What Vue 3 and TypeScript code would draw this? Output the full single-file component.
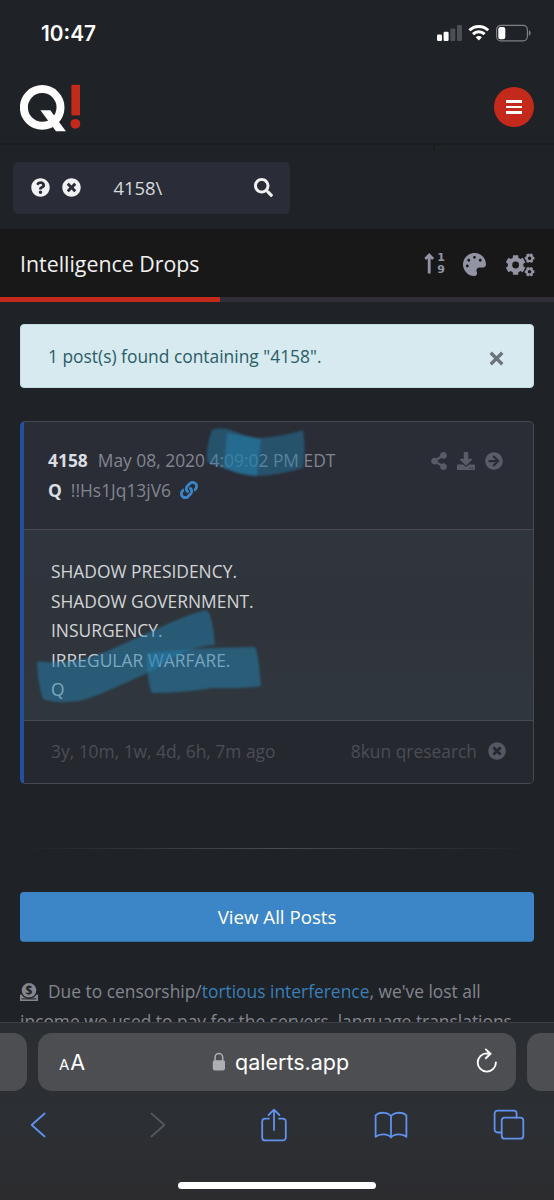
<script setup lang="ts">
interface Glyph {
  box: string
  d: string
}

const glyphs: Record<string, Glyph> = {
  question: {
    box: '0 0 512 512',
    d: 'M504 256c0 136.997-111.043 248-248 248S8 392.997 8 256C8 119.083 119.043 8 256 8s248 111.083 248 248zM262.655 90c-54.497 0-89.255 22.957-116.549 63.758-3.536 5.286-2.353 12.415 2.715 16.258l34.699 26.31c5.205 3.947 12.621 3.008 16.665-2.122 17.864-22.658 30.113-35.797 57.303-35.797 20.429 0 45.698 13.148 45.698 32.958 0 14.976-12.363 22.667-32.534 33.976C247.128 238.528 216 254.941 216 296v4c0 6.627 5.373 12 12 12h56c6.627 0 12-5.373 12-12v-1.333c0-28.462 83.186-29.647 83.186-106.667 0-58.002-60.165-102-116.531-102zM256 338c-25.365 0-46 20.635-46 46 0 25.364 20.635 46 46 46s46-20.636 46-46c0-25.365-20.635-46-46-46z',
  },
  clear: {
    box: '0 0 512 512',
    d: 'M256 8C119 8 8 119 8 256s111 248 248 248 248-111 248-248S393 8 256 8zm121.6 313.1c4.7 4.7 4.7 12.3 0 17L338 377.6c-4.7 4.7-12.3 4.7-17 0L256 312l-65.1 65.6c-4.7 4.7-12.3 4.7-17 0L134.4 338c-4.7-4.7-4.7-12.3 0-17l65.6-65-65.6-65.1c-4.7-4.7-4.7-12.3 0-17l39.6-39.6c4.7-4.7 12.3-4.7 17 0l65 65.7 65.1-65.6c4.7-4.7 12.3-4.7 17 0l39.6 39.6c4.7 4.7 4.7 12.3 0 17L312 256l65.6 65.1z',
  },
  search: {
    box: '0 0 512 512',
    d: 'M505 442.7L405.3 343c-4.5-4.5-10.6-7-17-7H372c27.6-35.3 44-79.7 44-128C416 93.1 322.9 0 208 0S0 93.1 0 208s93.1 208 208 208c48.3 0 92.7-16.4 128-44v16.3c0 6.4 2.5 12.5 7 17l99.7 99.7c9.4 9.4 24.6 9.4 33.9 0l28.3-28.3c9.4-9.4 9.4-24.6.1-34zM208 336c-70.7 0-128-57.2-128-128 0-70.7 57.2-128 128-128 70.7 0 128 57.2 128 128 0 70.7-57.2 128-128 128z',
  },
  palette: {
    box: '0 0 512 512',
    d: 'M204.3 5C104.9 24.4 24.8 104.3 5.2 203.4c-37 187 131.7 326.4 258.8 306.7 41.2-6.4 61.4-54.6 42.5-91.7-23.1-45.4 9.9-98.4 60.9-98.4h79.7c35.8 0 64.8-29.6 64.9-65.3C511.5 97.1 368.1-26.9 204.3 5zM96 320c-17.7 0-32-14.3-32-32s14.3-32 32-32 32 14.3 32 32-14.3 32-32 32zm32-128c-17.7 0-32-14.3-32-32s14.3-32 32-32 32 14.3 32 32-14.3 32-32 32zm128-64c-17.7 0-32-14.3-32-32s14.3-32 32-32 32 14.3 32 32-14.3 32-32 32zm128 64c-17.7 0-32-14.3-32-32s14.3-32 32-32 32 14.3 32 32-14.3 32-32 32z',
  },
  link: {
    box: '0 0 512 512',
    d: 'M326.612 185.391c59.747 59.809 58.927 155.698.36 214.59-.11.12-.24.25-.36.37l-67.2 67.2c-59.27 59.27-155.699 59.262-214.96 0-59.27-59.26-59.27-155.7 0-214.96l37.106-37.106c9.84-9.84 26.786-3.3 27.294 10.606.648 17.722 3.826 35.527 9.69 52.721 1.986 5.822.567 12.262-3.783 16.612l-13.087 13.087c-28.026 28.026-28.905 73.66-1.155 101.96 28.024 28.579 74.086 28.749 102.325.51l67.2-67.19c28.191-28.191 28.073-73.757 0-101.83-3.701-3.694-7.429-6.564-10.341-8.569a16.037 16.037 0 0 1-6.947-12.606c-.396-10.567 3.348-21.456 11.698-29.806l21.054-21.055c5.521-5.521 14.182-6.199 20.584-1.731a152.482 152.482 0 0 1 20.522 17.197zM467.547 44.449c-59.261-59.262-155.69-59.27-214.96 0l-67.2 67.2c-.12.12-.25.25-.36.37-58.566 58.892-59.387 154.781.36 214.59a152.454 152.454 0 0 0 20.521 17.196c6.402 4.468 15.064 3.789 20.584-1.731l21.054-21.055c8.35-8.35 12.094-19.239 11.698-29.806a16.037 16.037 0 0 0-6.947-12.606c-2.912-2.005-6.64-4.875-10.341-8.569-28.073-28.073-28.191-73.639 0-101.83l67.2-67.19c28.239-28.239 74.3-28.069 102.325.51 27.75 28.3 26.872 73.934-1.155 101.96l-13.087 13.087c-4.35 4.35-5.769 10.79-3.783 16.612 5.864 17.194 9.042 34.999 9.69 52.721.509 13.906 17.454 20.446 27.294 10.606l37.106-37.106c59.271-59.259 59.271-155.699.001-214.959z',
  },
  share: {
    box: '0 0 448 512',
    d: 'M352 320c-22.608 0-43.387 7.819-59.79 20.895l-102.486-64.054a96.551 96.551 0 0 0 0-41.683l102.486-64.054C308.613 184.181 329.392 192 352 192c53.019 0 96-42.981 96-96S405.019 0 352 0s-96 42.981-96 96c0 7.158.79 14.13 2.276 20.841L155.79 180.895C139.387 167.819 118.608 160 96 160c-53.019 0-96 42.981-96 96s42.981 96 96 96c22.608 0 43.387-7.819 59.79-20.895l102.486 64.054A96.301 96.301 0 0 0 256 416c0 53.019 42.981 96 96 96s96-42.981 96-96-42.981-96-96-96z',
  },
  download: {
    box: '0 0 512 512',
    d: 'M216 0h80c13.3 0 24 10.7 24 24v168h87.7c17.8 0 26.7 21.5 14.1 34.1L269.7 378.3c-7.5 7.5-19.8 7.5-27.3 0L90.1 226.1c-12.6-12.6-3.7-34.1 14.1-34.1H192V24c0-13.3 10.7-24 24-24zm296 376v112c0 13.3-10.7 24-24 24H24c-13.3 0-24-10.7-24-24V376c0-13.3 10.7-24 24-24h146.7l49 49c20.1 20.1 52.5 20.1 72.6 0l49-49H488c13.3 0 24 10.7 24 24zm-124 88c0-11-9-20-20-20s-20 9-20 20 9 20 20 20 20-9 20-20zm64 0c0-11-9-20-20-20s-20 9-20 20 9 20 20 20 20-9 20-20z',
  },
  go: {
    box: '0 0 512 512',
    d: 'M256 8c137 0 248 111 248 248S393 504 256 504 8 393 8 256 119 8 256 8zm-28.9 143.6l75.5 72.4H120c-13.3 0-24 10.7-24 24v16c0 13.3 10.7 24 24 24h182.6l-75.5 72.4c-9.7 9.3-9.9 24.8-.4 34.3l11 10.9c9.4 9.4 24.6 9.4 33.9 0L404.3 273c9.4-9.4 9.4-24.6 0-33.9L271.6 106.3c-9.4-9.4-24.6-9.4-33.9 0l-11 10.9c-9.5 9.6-9.3 25.1.4 34.4z',
  },
}

const postActions = ['share', 'download', 'go']

const postLines = [
  'SHADOW PRESIDENCY.',
  'SHADOW GOVERNMENT.',
  'INSURGENCY.',
  'IRREGULAR WARFARE.',
  'Q',
]

/** Outline of a six-toothed gear with a round hole. */
function gear(cx: number, cy: number, outer: number, root: number, hole: number, turn: number): string {
  const pts: string[] = []
  for (let i = 0; i < 6; i++) {
    const mid = turn + i * 60
    const corners: [number, number][] = [[-21, root], [-15, outer], [15, outer], [21, root]]
    for (const [offset, r] of corners) {
      const a = ((mid + offset) * Math.PI) / 180
      pts.push(`${(cx + r * Math.cos(a)).toFixed(2)} ${(cy + r * Math.sin(a)).toFixed(2)}`)
    }
  }
  const ring = `M${cx - hole} ${cy}a${hole} ${hole} 0 1 0 ${hole * 2} 0a${hole} ${hole} 0 1 0 ${-hole * 2} 0z`
  return `M${pts.join('L')}z${ring}`
}

const gears = [
  gear(9.6, 12, 10.1, 7.8, 3.4, 30),
  gear(23.6, 5.2, 5, 3.9, 1.8, 0),
  gear(23.6, 18.7, 5, 3.9, 1.8, 0),
]
</script>

<template>
  <div class="phone">
    <div class="status">
      <span class="clock">10:47</span>
      <svg class="signals" width="96" height="18" viewBox="0 0 96 18">
        <g fill="#fff">
          <rect x="0" y="10.6" width="5" height="6.4" rx="1.2" />
          <rect x="6.6" y="7.8" width="5" height="9.2" rx="1.2" />
          <rect x="13.3" y="4.4" width="5" height="12.6" rx="1.2" fill="#4c4f53" />
          <rect x="20" y="1" width="5" height="16" rx="1.2" fill="#4c4f53" />
        </g>
        <g fill="none" stroke="#fff" stroke-width="2.9">
          <path d="M32.4 6.3a13.4 13.4 0 0 1 18.8 0" />
          <path d="M36 10.1a8.3 8.3 0 0 1 11.6 0" />
        </g>
        <path d="M38.7 13.2a4.3 4.3 0 0 1 6.2 0l-3.1 3.4z" fill="#fff" />
        <rect x="59.600" y="1.400" width="30.800" height="15.400" rx="4.200" fill="none" stroke="#7e8083" stroke-width="1.200" />
        <rect x="61.300" y="3" width="7" height="12.200" rx="2.200" fill="#fff" />
        <path d="M91.900 6.600c2.400.6 2.400 4.400 0 5z" fill="#7e8083" />
      </svg>
    </div>

    <header class="top">
      <svg class="logo" width="64" height="50" viewBox="0 0 64 50">
        <circle cx="22.200" cy="23.400" r="18.300" fill="none" stroke="#fff" stroke-width="8" />
        <path d="M20.400 26.200h9.900L45.900 47.300H36z" fill="#fff" />
        <path d="M51.400 .8h8.600v30.600h-8.600z" fill="#c42a1c" />
        <circle cx="55.400" cy="39.800" r="4.900" fill="#c42a1c" />
      </svg>
      <button class="menu" aria-label="Menu"><i></i><i></i><i></i></button>
    </header>

    <div class="search-row">
      <div class="search">
        <svg class="ic q" :viewBox="glyphs.question.box"><path :d="glyphs.question.d" /></svg>
        <svg class="ic x" :viewBox="glyphs.clear.box"><path :d="glyphs.clear.d" /></svg>
        <span class="term">4158\</span>
        <svg class="ic find" :viewBox="glyphs.search.box"><path :d="glyphs.search.d" /></svg>
      </div>
      <div class="tick"></div>
    </div>

    <div class="title">
      <h1>Intelligence Drops</h1>
      <div class="sort">
        <svg width="11" height="24" viewBox="0 0 11 24">
          <path d="M5.200 21.600V3.600M1.300 7l3.900-4 3.900 4" fill="none" stroke="currentColor" stroke-width="2.800" />
        </svg>
        <div class="digits"><span>1</span><span>9</span></div>
      </div>
      <svg class="ic pal" :viewBox="glyphs.palette.box"><path :d="glyphs.palette.d" /></svg>
      <svg class="cogs" width="29" height="24" viewBox="0 0 29 24">
        <path v-for="(g, i) in gears" :key="i" :d="g" fill-rule="evenodd" />
      </svg>
    </div>
    <div class="progress"><div></div></div>

    <main>
      <div class="alert">
        <span>1 post(s) found containing "4158".</span>
        <svg width="15" height="15" viewBox="0 0 14 14"><path d="M1.600 1.600l10.800 10.800M12.400 1.600L1.600 12.400" /></svg>
      </div>

      <article class="card">
        <div class="head">
          <div class="meta">
            <div class="row"><b>4158</b><span class="date">May 08, 2020 4:09:02 PM EDT</span></div>
            <div class="row">
              <b>Q</b><span class="trip">!!Hs1Jq13jV6</span>
              <svg class="ic chain" :viewBox="glyphs.link.box"><path :d="glyphs.link.d" /></svg>
            </div>
          </div>
          <div class="actions">
            <svg v-for="a in postActions" :key="a" class="ic" :class="a" :viewBox="glyphs[a].box">
              <path :d="glyphs[a].d" />
            </svg>
          </div>
        </div>
        <div class="body">
          <p v-for="line in postLines" :key="line">{{ line }}</p>
        </div>
        <div class="foot">
          <span class="ago">3y, 10m, 1w, 4d, 6h, 7m ago</span>
          <span class="board">8kun qresearch</span>
          <svg class="ic" :viewBox="glyphs.clear.box"><path :d="glyphs.clear.d" /></svg>
        </div>
        <svg class="marker" width="514" height="363" viewBox="20 421 514 363">
          <path d="M212 430Q222 426 234 431Q248 438 262 438Q284 436 303 430Q306 448 303 468Q280 475 256 476Q230 472 207 462Q206 446 212 430z" opacity=".46" />
          <path d="M227 433Q246 436 261 439L257 476Q241 476 224 468z" opacity=".56" />
          <path d="M37 663Q38 660 45 662Q80 664 112 649C145 635 178 617 206 610Q212 612 215 645Q182 647 154 670C122 684 97 697 79 701Q54 704 43 699Q38 684 37 663z" opacity=".52" />
          <path d="M147 653Q200 647 255 647Q258 650 261 686Q240 689 213 688Q184 693 152 693Q147 684 147 653z" opacity=".55" />
        </svg>
      </article>

      <div class="rule"></div>
      <button class="all">View All Posts</button>

      <p class="note">
        <svg class="donate" width="18" height="18" viewBox="0 0 18 18">
          <path d="M0 11.600h2.600l1.800 2h9.200l1.800-2H18V18H0z" />
          <circle cx="9" cy="7.600" r="8.400" fill="#1f2226" />
          <circle cx="9" cy="7.300" r="7.300" />
          <path d="M1.600 15.900h14.800" stroke="#1f2226" stroke-width="1" />
          <text x="9" y="11.600">$</text>
        </svg>
        <span>Due to censorship/<a>tortious interference</a>, we've lost all</span><br />
        <span>income we used to pay for the servers, language translations</span>
      </p>
    </main>

    <footer class="safari">
      <div class="tabs">
        <div class="tab side"></div>
        <div class="tab current">
          <span class="aa"><small>A</small>A</span>
          <div class="site">
            <svg width="14" height="20" viewBox="0 0 14 20">
              <rect x=".8" y="8.200" width="12.200" height="10.200" rx="1.800" fill="#aeaeb5" />
              <path d="M3.100 9V5.200a3.800 3.800 0 0 1 7.600 0V9" fill="none" stroke="#aeaeb5" stroke-width="1.500" />
            </svg>
            <span>qalerts.app</span>
          </div>
          <svg class="reload" width="22" height="26" viewBox="0 0 22 26">
            <path d="M10.800 5.400a9.100 9.100 0 1 0 9.100 9.100M9.800 1.400l4.700 4.400-4.700 4.400M14.200 5.700l-3.400-.2" />
          </svg>
        </div>
        <div class="tab side"></div>
      </div>
      <nav class="tools">
        <svg viewBox="-8 -3 34 34"><path d="M15.600 2.500L2.700 14l12.900 11.500" /></svg>
        <svg class="off" viewBox="-10 -3 34 34"><path d="M2.400 2.500L15.300 14 2.400 25.500" /></svg>
        <svg viewBox="-3 0 34 34">
          <path d="M9 10.600H5.200A3 3 0 0 0 2.200 13.600v15.800a3 3 0 0 0 3 3h17.600a3 3 0 0 0 3-3V13.600a3 3 0 0 0-3-3H19M14 22V1.600M8.600 7L14 1.600 19.400 7" />
        </svg>
        <svg viewBox="0 -3 34 34">
          <path d="M17 5v21.500M17 5C14 1.200 5.500.4 1.600 4.400v21.400C5.500 22.400 14 22.600 17 26.500C20 22.600 28.500 22.400 32.400 25.800V4.400C28.500.4 20 1.200 17 5z" />
        </svg>
        <svg viewBox="-1 -1 34 34">
          <path d="M8.600 23.500H4.600a3 3 0 0 1-3-3V4.600a3 3 0 0 1 3-3h16a3 3 0 0 1 3 3V8.700" />
          <rect x="8.700" y="8.700" width="21.600" height="21" rx="3" />
        </svg>
      </nav>
      <div class="home"></div>
    </footer>
  </div>
</template>

<style>
body {
  margin: 0;
  background: #1f2226;
}
</style>

<style scoped>
.phone {
  width: 554px;
  height: 1200px;
  overflow: hidden;
  display: flex;
  flex-direction: column;
  background: #1f2226;
  color: #84858f;
  font-family: 'Open Sans', 'Noto Sans', sans-serif;
  font-size: 17.4px;
  box-sizing: border-box;
}
.phone * {
  box-sizing: border-box;
}
svg {
  display: block;
  flex: none;
}
button {
  border: 0;
  padding: 0;
  font: inherit;
}
.ic {
  fill: currentColor;
}

.status {
  height: 66px;
  flex: none;
  display: flex;
  justify-content: space-between;
  padding: 0 21px 0 41px;
}
.clock {
  font: 600 20.8px/24px Inter, sans-serif;
  color: #fff;
  padding-top: 22px;
}
.signals {
  margin-top: 24px;
}

.top {
  height: 79px;
  flex: none;
  display: flex;
  justify-content: space-between;
  padding: 0 20px;
  border-bottom: 2px solid #1a1c20;
}
.logo {
  margin-top: 18px;
}
.menu {
  width: 40px;
  height: 40px;
  margin-top: 21px;
  border-radius: 50%;
  background: #c42a1c;
  display: flex;
  flex-direction: column;
  align-items: center;
  justify-content: center;
  gap: 3.2px;
}
.menu i {
  width: 15.5px;
  height: 2.5px;
  border-radius: 0.5px;
  background: #fff;
}

.search-row {
  height: 84px;
  flex: none;
  display: flex;
  align-items: flex-start;
  padding: 0 13px;
}
.tick {
  width: 2px;
  height: 6px;
  margin-left: 143px;
  background: #1a1c20;
}
.search {
  width: 277px;
  height: 52px;
  margin-top: 17px;
  border-radius: 5px;
  background: #2a2d37;
  color: #f0f1f3;
  display: flex;
  align-items: center;
  padding: 0 17px 2px 17.5px;
}
.q,
.x {
  width: 19px;
  height: 19px;
}
.x {
  margin-left: 12px;
}
.term {
  margin-left: 33px;
  font-size: 18.4px;
  color: #d8d9de;
}
.find {
  width: 19px;
  height: 19px;
  margin-left: auto;
}

.title {
  height: 68px;
  flex: none;
  display: flex;
  align-items: center;
  padding: 0 20px;
  background: #181818;
  color: #9394a3;
}
.title h1 {
  margin: 0 auto 0 0;
  font-size: 21.35px;
  font-weight: 400;
  color: #f1f1f1;
  padding-top: 1px;
  white-space: nowrap;
}
.sort {
  display: flex;
  gap: 2px;
  margin-top: 2px;
}
.digits {
  display: flex;
  flex-direction: column;
  font: 700 11px/12px 'DejaVu Sans', sans-serif;
}
.pal {
  width: 23px;
  height: 23px;
  margin: 3px 20px 0 18px;
}
.cogs {
  fill: currentColor;
  margin-top: 3px;
  margin-right: -1px;
}
.progress {
  height: 5px;
  flex: none;
  background: #302f37;
}
.progress div {
  width: 220px;
  height: 5px;
  background: #c42a1c;
}

main {
  flex: 1;
  min-height: 0;
  overflow: hidden;
  padding: 22px 20px 0;
}
.alert {
  height: 64px;
  border-radius: 4px;
  border: 1px solid #c3dde3;
  background: #d6eaef;
  color: #2c5c68;
  display: flex;
  align-items: center;
  justify-content: space-between;
  padding: 0 29px 0 27px;
}
.alert span {
  white-space: nowrap;
}
.alert svg {
  margin-top: 4px;
  stroke: #6b7577;
  stroke-width: 3.1;
}

.card {
  position: relative;
  height: 363px;
  margin-top: 33px;
  border: 1px solid #464951;
  border-left: 4px solid #234f9c;
  border-radius: 5px;
  background: #2a2d36;
}
.head {
  height: 108px;
  display: flex;
  justify-content: space-between;
  padding: 24px 30px 0 24px;
  border-bottom: 1px solid #464951;
}
.meta {
  margin-top: -1px;
}
.row {
  display: flex;
  align-items: center;
  height: 30px;
  white-space: nowrap;
}
.row b {
  color: #dcdde3;
}
.row span {
  margin-left: 10px;
}
.row .trip {
  margin-left: 9px;
}
.chain {
  width: 18px;
  height: 18px;
  margin-left: 9px;
  color: #3a86c8;
}
.actions {
  display: flex;
  gap: 10px;
  padding-top: 6px;
  color: #595b66;
}
.actions .share {
  width: 16px;
  height: 18px;
}
.actions .download,
.actions .go {
  width: 18px;
  height: 18px;
}
.body {
  height: 191px;
  padding: 27px 27px 0;
  background: linear-gradient(#2f353d, #2f343a 50%, #2f373e);
  border-bottom: 1px solid #464951;
  color: #d3d4d9;
}
.body p {
  margin: 0;
  height: 29.5px;
  line-height: 29.5px;
  white-space: nowrap;
}
.foot {
  height: 62px;
  display: flex;
  align-items: center;
  padding: 0 27px 2px;
  background: #26282f;
  border-radius: 0 0 4px 0;
  color: #4b4d56;
  white-space: nowrap;
}
.board {
  margin-left: auto;
}
.foot .ic {
  width: 18px;
  height: 18px;
  margin-left: 11px;
  color: #555762;
}
.marker {
  position: absolute;
  left: -4px;
  top: -1px;
  fill: #247eac;
  filter: blur(1.3px);
}

.rule {
  height: 1px;
  margin-top: 64px;
  background: linear-gradient(90deg, transparent, #4a4c4f 50%, transparent);
}
.all {
  display: block;
  width: 514px;
  height: 50px;
  margin-top: 43px;
  padding-bottom: 1px;
  border-radius: 4px;
  background: #3c86c7;
  border-bottom: 1px solid #326fa5;
  color: #fff;
  font-size: 18.7px;
}
.note {
  margin: 34px 0 0;
  line-height: 30px;
  white-space: nowrap;
}
.note a {
  color: #3a7fb9;
}
.donate {
  display: inline-block;
  vertical-align: -3px;
  margin-right: 10px;
  fill: #84858f;
}
.donate text {
  font: 700 12px 'Open Sans', sans-serif;
  text-anchor: middle;
  fill: #1f2226;
}

.safari {
  height: 178px;
  flex: none;
  border-top: 1px solid #3c3e42;
  background: linear-gradient(#2a2d31, #2c2f33 60%, #2c2c2f);
  display: flex;
  flex-direction: column;
  align-items: center;
}
.tabs {
  width: 554px;
  display: flex;
  gap: 11px;
  padding-top: 10px;
}
.tab {
  height: 58px;
  background: #4c4e52;
}
.tab.side {
  width: 27px;
  flex: none;
  border-radius: 0 14px 14px 0;
}
.tab.side:last-child {
  border-radius: 14px 0 0 14px;
}
.tab.current {
  flex: 1;
  border-radius: 14px;
  display: flex;
  align-items: center;
  justify-content: space-between;
  color: #fff;
  padding: 0 18px 0 21px;
  font-family: Inter, sans-serif;
}
.aa {
  font-size: 21.5px;
  line-height: 30px;
  padding-top: 2px;
}
.aa small {
  font-size: 15px;
  margin-right: 1px;
}
.site {
  display: flex;
  align-items: center;
  gap: 9px;
  font-size: 21.5px;
  line-height: 30px;
}
.reload {
  fill: none;
  stroke: #fff;
  stroke-width: 1.9;
  stroke-linecap: round;
  margin-top: -3px;
}
.tools {
  width: 554px;
  height: 70px;
  display: flex;
  align-items: center;
  justify-content: space-between;
  padding: 0 28px 2px 21px;
}
.tools svg {
  width: 34px;
  height: 34px;
  fill: none;
  stroke: #6092ee;
  stroke-width: 1.8;
  stroke-linecap: round;
  stroke-linejoin: round;
}
.tools .off {
  stroke: #55575c;
}
.home {
  width: 198px;
  height: 7px;
  border-radius: 4px;
  background: #fff;
  margin-top: 21px;
}
</style>
